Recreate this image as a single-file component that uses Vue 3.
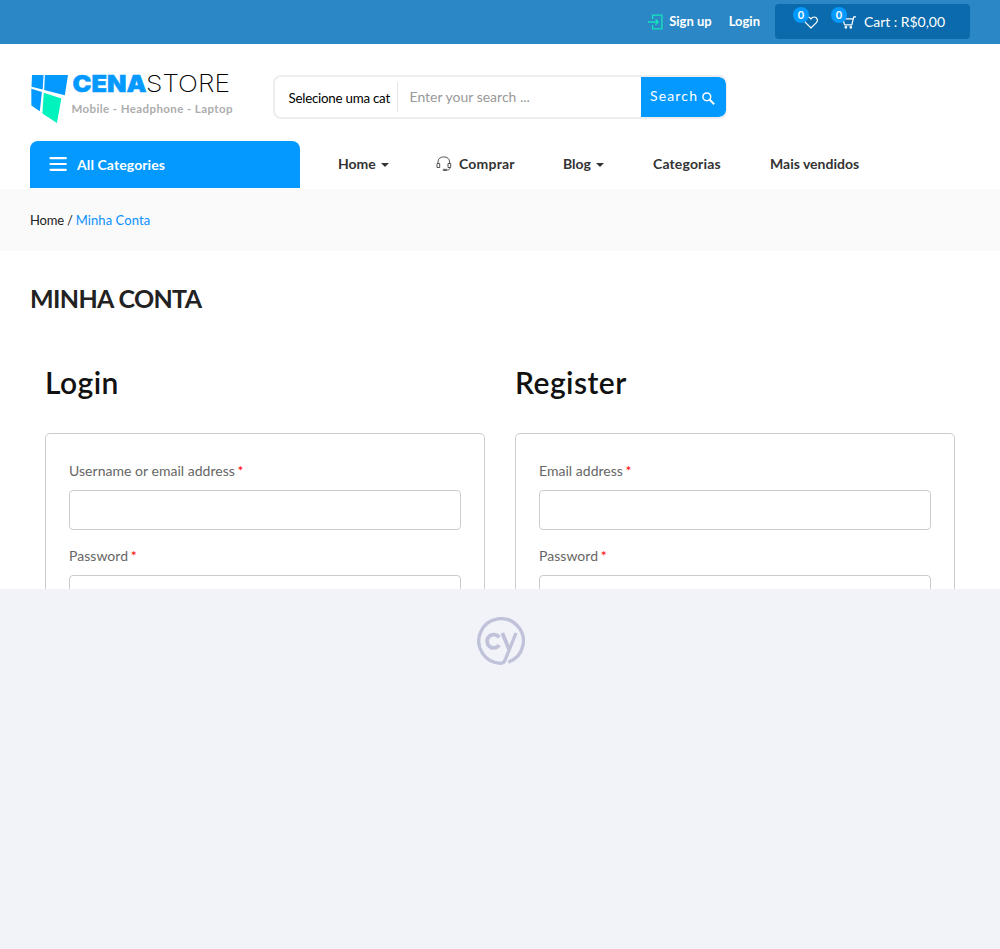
<script setup>
const forms = [
  { title: 'Login', fields: ['Username or email address', 'Password'] },
  { title: 'Register', fields: ['Email address', 'Password'] },
]
</script>

<template>
  <div class="screen">
    <div class="page">
      <div class="topbar">
        <a class="signup">
          <svg width="16" height="16" viewBox="0 0 16 16" fill="none" stroke="#15e6bd" stroke-width="1.3">
            <path d="M4.600 5V1.100h9.300v13.800H4.600V11M0 8h10M7.500 5.300 10.200 8 7.500 10.700" />
          </svg>
          <span>Sign up</span>
        </a>
        <a class="login">Login</a>
        <div class="cart">
          <span class="wish">
            <svg width="14" height="13" viewBox="0 0 14 13" fill="none" stroke="#fff" stroke-width="1.2">
              <path d="M7 12 1.600 6.600C-.4 4.200 1 1 3.800 1 5.400 1 6.400 1.900 7 3c.6-1.100 1.600-2 3.200-2 2.800 0 4.200 3.200 2.200 5.600z" />
            </svg>
            <b class="badge">0</b>
          </span>
          <span class="basket">
            <svg width="14" height="13" viewBox="0 0 14 13" fill="none" stroke="#fff" stroke-width="1.2">
              <path d="M14 .9h-2.200L9.800 8.800H2.200M11.200 2.800H1l1.400 5.600" />
              <circle cx="3.900" cy="11.300" r=".8" fill="#fff" /><circle cx="8.800" cy="11.300" r=".8" fill="#fff" />
            </svg>
            <b class="badge">0</b>
          </span>
          <span class="total">Cart : R$0,00</span>
        </div>
      </div>

      <header class="header">
        <svg class="logo" width="204" height="54" viewBox="0 0 204 54">
          <path fill="#0499ff" d="M2 3h11.500l-.8 14.500L1.500 14.800zM14.900 3H38l-3.200 20.300-20.600-5.300zM1.300 16.800l10.600 3.100-2.100 19.300-8.400-5.700z" />
          <path fill="#00f2bd" d="m13.800 20.700 17.600 5.900-4.500 24.300-14.500-9.400z" />
          <text x="42.500" y="20" class="brand-bold" textLength="74" lengthAdjust="spacingAndGlyphs">CENA</text>
          <text x="116" y="20" class="brand-light" textLength="84" lengthAdjust="spacingAndGlyphs">STORE</text>
          <text x="41.500" y="41" class="tagline" textLength="161">Mobile - Headphone - Laptop</text>
        </svg>
        <div class="search">
          <span class="select">Selecione uma cat</span>
          <span class="query">Enter your search ...</span>
          <button class="go">
            <span>Search</span>
            <svg width="13" height="13" viewBox="0 0 13 13" fill="none" stroke="#fff" stroke-width="1.500">
              <circle cx="4.800" cy="4.800" r="3.900" /><path d="m7.600 7.600 4.600 4.600" stroke-width="2" />
            </svg>
          </button>
        </div>
      </header>

      <nav class="nav">
        <div class="all">
          <svg width="18" height="14" viewBox="0 0 18 14" stroke="#fff" stroke-width="2.200" stroke-linecap="round">
            <path d="M1.500 1.200h15.300M1.500 7h15.300M1.500 12.800h15.300" />
          </svg>
          <span>All Categories</span>
        </div>
        <a class="n-home">Home<i class="caret"></i></a>
        <a class="n-shop">
          <svg width="16" height="16" viewBox="0 0 16 16" fill="none" stroke="#444" stroke-width=".9">
            <path d="M2 7.500V6C2 2.700 4.300.9 7.800.9S13.600 2.700 13.600 6v1.500M1 7.500h2.700v4H1zM12 7.500h2.700v4H12zM13.800 11.500v.8c0 1-1 1.700-2.500 1.700h-.8" />
            <path d="M7.300 13.300h3.200v1.200H7.300z" />
          </svg>
          <span>Comprar</span>
        </a>
        <a class="n-blog">Blog<i class="caret"></i></a>
        <a class="n-cat">Categorias</a>
        <a class="n-best">Mais vendidos</a>
      </nav>

      <div class="crumbs"><span>Home / </span><a>Minha Conta</a></div>

      <h1>MINHA CONTA</h1>

      <div class="columns">
        <section v-for="form in forms" :key="form.title">
          <h2>{{ form.title }}</h2>
          <div class="panel">
            <div v-for="field in form.fields" :key="field" class="field">
              <label>{{ field }} <em>*</em></label>
              <div class="input"></div>
            </div>
          </div>
        </section>
      </div>
    </div>

    <div class="blank">
      <svg width="48" height="48" viewBox="0 0 48 48" fill="none" stroke="#bfc2d9" stroke-width="3.300">
        <path d="M31.300 45.100A22.300 22.300 0 1 0 24 46.300c2.500-.2 3.400-1.400 4.300-3.700L39 16" />
        <path stroke-width="3.800" d="m25.300 16 6.900 16.500M22.200 20.300a6.700 6.700 0 1 0 0 7.900" />
      </svg>
    </div>
  </div>
</template>

<style>
body { margin: 0; }
</style>

<style scoped>
.screen { width: 1000px; height: 949px; overflow: hidden; background: #f2f3f9; font-family: Lato, "Open Sans", sans-serif; font-size: 14px; color: #222; }
.screen * { box-sizing: border-box; }
.page { height: 589px; overflow: hidden; background: #fff; }
svg { display: block; flex: none; }
span, a { white-space: pre; }

.topbar { height: 44px; background: #2b87c5; display: flex; justify-content: flex-end; padding: 4px 30px 0 0; color: #fff; font-weight: 700; font-size: 13px; }
.signup { display: flex; align-items: center; height: 35px; gap: 5px; margin-right: 17px; }
.signup span { line-height: 16px; padding-bottom: 2px; }
.login { height: 35px; line-height: 35px; margin-right: 15px; }
.cart { width: 195px; height: 35px; border-radius: 4px; background: #0a6aab; display: flex; font-weight: 400; font-size: 14px; }
.wish, .basket { position: relative; padding-top: 12px; }
.wish { margin-left: 29px; }
.basket { margin-left: 24px; }
.badge { position: absolute; top: 3px; left: -11px; width: 16px; height: 16px; border-radius: 50%; background: #0499ff; font-size: 11px; line-height: 16px; text-align: center; }
.total { margin-left: 8px; line-height: 36px; letter-spacing: -.04px; }

.header { height: 97px; display: flex; padding: 28px 0 0 30px; }
.logo { overflow: visible; }
.brand-bold { font: 900 23.500px Inter, sans-serif; fill: #0499ff; stroke: #0499ff; stroke-width: .5; }
.brand-light { font: 200 23.500px Inter, sans-serif; fill: #000; }
.tagline { font: 700 11.500px Lato, sans-serif; fill: #adadad; }
.search { width: 454px; height: 44px; margin: 3px 0 0 39px; border: 2px solid #eee; border-right-width: 1px; border-radius: 8px; display: flex; align-items: center; overflow: hidden; }
.select { width: 123px; height: 30px; line-height: 32px; padding-left: 13.500px; border-right: 1px solid #e5e5e5; color: #000; font-size: 13.330px; letter-spacing: -.24px; }
.query { flex: 1; padding: 0 0 2px 11.500px; color: #999; }
.go { width: 85px; height: 40px; padding: 0 0 0 9px; border: 0; border-radius: 0 7px 7px 0; background: #0499ff; color: #fff; font: 400 14px Lato, sans-serif; letter-spacing: 1.150px; display: flex; align-items: center; gap: 4px; }
.go span { padding-bottom: 3px; }
.go svg { margin-top: 2px; }

.nav { height: 48px; display: flex; padding-left: 30px; }
.nav > a { height: 45px; display: flex; align-items: center; font-weight: 700; color: #333; }
.all { width: 270px; height: 47px; padding-left: 19px; border-radius: 8px 8px 0 0; background: #0499ff; color: #fff; font-weight: 700; display: flex; align-items: center; gap: 10px; letter-spacing: .1px; }
.all svg { margin-bottom: 2px; }
.caret { border: 4px solid transparent; border-top-color: #333; border-bottom: 0; margin: 3px 0 0 5px; }
.n-home { width: 98px; margin-left: 38px; }
.n-shop { width: 127px; gap: 7px; letter-spacing: .2px; }
.n-blog { width: 90px; }
.n-cat { width: 117px; letter-spacing: .15px; }

.crumbs { height: 62px; padding-left: 30px; background: #fafafa; line-height: 62px; font-size: 13px; }
.crumbs span { letter-spacing: -.2px; }
.crumbs a { color: #0a90ff; letter-spacing: .07px; }
h1 { margin: 31px 0 0 30px; font-size: 25px; line-height: 32px; font-weight: 700; letter-spacing: -.63px; }
.columns { display: flex; gap: 30px; padding: 48px 45px 0; }
.columns section { width: 440px; }
h2 { margin: 0; height: 71px; line-height: 40px; font-size: 30px; font-weight: 600; color: #111; letter-spacing: .45px; }
.panel { height: 300px; border: 1px solid #ccc; border-radius: 5px; padding: 25px 23px; }
.field { height: 85px; color: #666; }
.field label { display: block; height: 31px; line-height: 24px; letter-spacing: .03px; }
.field em { color: #f00; font-style: normal; margin-left: -1px; }
.input { height: 40px; border: 1px solid #ccc; border-radius: 4px; }
.blank { display: flex; justify-content: center; padding: 28px 0 0 1px; }
</style>
